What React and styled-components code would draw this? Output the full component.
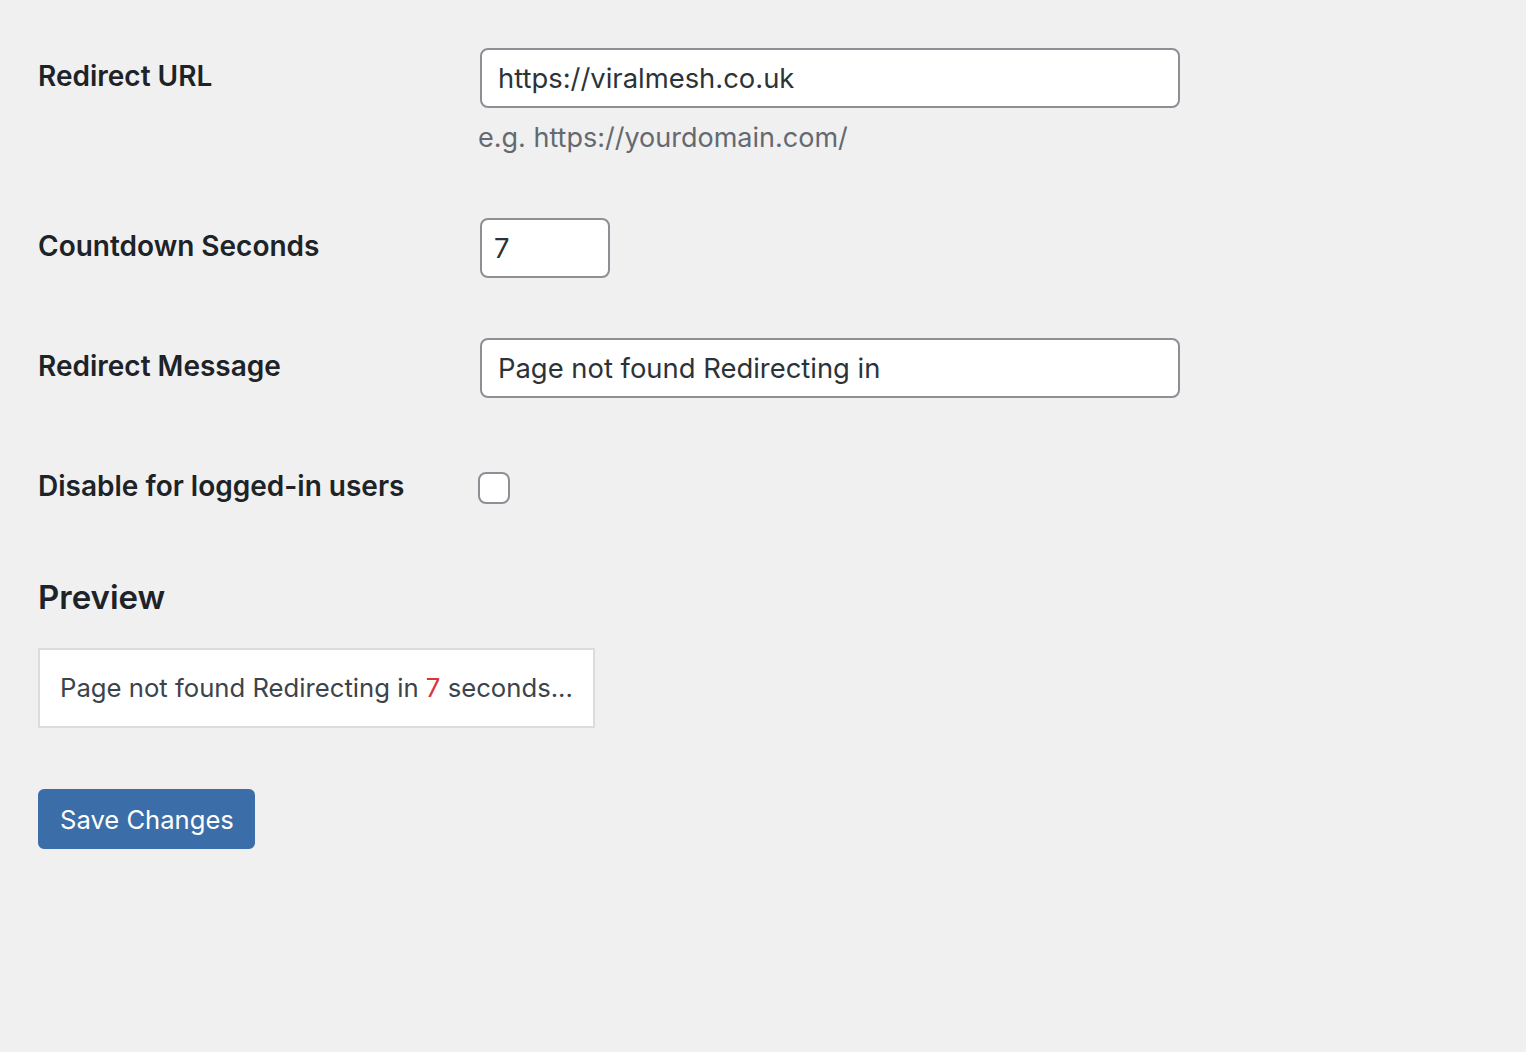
import React from 'react'
import styled, { createGlobalStyle } from 'styled-components'

const GlobalStyle = createGlobalStyle`
  html, body {
    margin: 0;
    background: #f0f0f1;
  }

  body {
    font-family: Inter, "Noto Sans", "Liberation Sans", sans-serif;
    color: #1d2327;
    -webkit-font-smoothing: antialiased;
  }
`

const Wrap = styled.form`
  padding: 18px 0 0 38px;
`

const Row = styled.div`
  display: flex;
  align-items: flex-start;
`

const Label = styled.label`
  width: 420px;
  flex: none;
  padding: 40px 0;
  font-size: 28px;
  line-height: 36px;
  font-weight: 600;
  color: #1d2327;
`

const Field = styled.div`
  padding: 30px 0 30px 22px;
`

const TextInput = styled.input`
  box-sizing: border-box;
  display: block;
  width: ${p => p.$width || 700}px;
  height: 60px;
  margin: 0;
  padding: 0 ${p => p.$pad || 16}px;
  border: 2px solid #8c8f94;
  border-radius: 8px;
  background: #fff;
  font-family: inherit;
  font-size: 27.4px;
  color: #2c3338;
  outline: none;
`

const Description = styled.p`
  margin: 10px 0 0 -2px;
  font-size: 27px;
  line-height: 40px;
  color: #646970;
`

const Checkbox = styled.span`
  display: block;
  box-sizing: border-box;
  width: 32px;
  height: 32px;
  margin: 14px 0 0 -2px;
  border: 2px solid #8c8f94;
  border-radius: 8px;
  background: #fff;
`

const Heading = styled.h2`
  margin: 30px 0 28px;
  font-size: 33px;
  line-height: 46px;
  font-weight: 600;
  color: #1d2327;
`

const PreviewBox = styled.div`
  display: inline-block;
  padding: 18px 20px;
  border: 2px solid #dcdcde;
  background: #fff;
  font-size: 25.7px;
  line-height: 40px;
  color: #3c434a;
`

const Count = styled.span`
  color: #d63638;
`

const Submit = styled.p`
  margin: 61px 0 0;
`

const SaveButton = styled.button`
  box-sizing: border-box;
  height: 60px;
  padding: 0 19px 0 20px;
  border: 2px solid #3b6ea8;
  border-radius: 6px;
  background: #3b6ea8;
  color: #fff;
  font-family: inherit;
  font-size: 25.6px;
  cursor: pointer;
`

const App = () => (
  <>
    <GlobalStyle />
    <Wrap onSubmit={e => e.preventDefault()}>
      <Row>
        <Label>Redirect URL</Label>
        <Field>
          <TextInput defaultValue="https://viralmesh.co.uk" />
          <Description>e.g. https://yourdomain.com/</Description>
        </Field>
      </Row>
      <Row>
        <Label>Countdown Seconds</Label>
        <Field>
          <TextInput $width={130} $pad={12} defaultValue="7" />
        </Field>
      </Row>
      <Row>
        <Label>Redirect Message</Label>
        <Field>
          <TextInput defaultValue="Page not found Redirecting in" />
        </Field>
      </Row>
      <Row>
        <Label>Disable for logged-in users</Label>
        <Field>
          <Checkbox role="checkbox" aria-checked="false" />
        </Field>
      </Row>

      <Heading>Preview</Heading>
      <PreviewBox>
        Page not found Redirecting in <Count>7</Count> seconds...
      </PreviewBox>

      <Submit>
        <SaveButton type="submit">Save Changes</SaveButton>
      </Submit>
    </Wrap>
  </>
)

export default App
